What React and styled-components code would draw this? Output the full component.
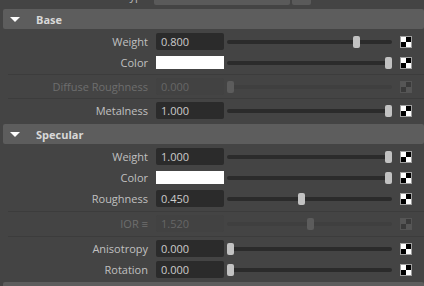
import React from "react";
import styled, { createGlobalStyle } from "styled-components";

const Global = createGlobalStyle`
  html, body {
    margin: 0;
    padding: 0;
    background: #444444;
    overflow: hidden;
  }
  body {
    font-family: "Open Sans", "Liberation Sans", sans-serif;
    font-size: 11px;
  }
`;

const Editor = styled.div`
  width: 424px;
  height: 286px;
  overflow: hidden;
  background: #444444;
  display: flex;
  flex-direction: column;
`;

// partially scrolled-off row at the top
const TypeRow = styled.div`
  display: flex;
  align-items: center;
  flex: none;
  height: 20px;
  margin-top: -15px;
`;

const TypeLabel = styled.span`
  width: 148px;
  text-align: right;
  color: #bdbdbd;
`;

const Dropdown = styled.div`
  width: 136px;
  height: 20px;
  margin-left: 6px;
  background: #5a5a5a;
  border-radius: 2px;
  color: #d0d0d0;
  line-height: 20px;
  padding-left: 6px;
  box-sizing: border-box;
`;

const DropButton = styled.div`
  width: 19px;
  height: 20px;
  margin-left: 2px;
  background: #5a5a5a;
  border-radius: 2px;
`;

const Frame = styled.section`
  display: flex;
  flex-direction: column;
  flex: none;
  margin-top: ${(p) => p.$gap}px;
`;

const FrameHeader = styled.div`
  height: 20px;
  margin-left: 3px;
  background: #5d5d5d;
  border-radius: 2px;
  display: flex;
  align-items: center;
`;

const Arrow = styled.span`
  width: 0;
  height: 0;
  border-left: 5px solid transparent;
  border-right: 5px solid transparent;
  border-top: 5px solid #ffffff;
  margin-left: 7px;
  margin-right: 16px;
`;

const FrameTitle = styled.span`
  font-weight: 700;
  color: #d8d8d8;
`;

const FrameBody = styled.div`
  margin-left: 8px;
  padding-top: 2px;
  display: flex;
  flex-direction: column;
`;

const Row = styled.div`
  display: flex;
  align-items: center;
  height: 21px;
`;

const Label = styled.span`
  width: 140px;
  margin-right: 8px;
  text-align: right;
  white-space: nowrap;
  color: ${(p) => (p.$disabled ? "#6e6e6e" : "#c0c0c0")};
`;

const Field = styled.div`
  width: 68px;
  height: 17px;
  box-sizing: border-box;
  padding-left: 5px;
  line-height: 17px;
  border-radius: 2px;
  background: ${(p) => (p.$disabled ? "#424242" : "#2b2b2b")};
  color: ${(p) => (p.$disabled ? "#666666" : "#cccccc")};
`;

const Swatch = styled.div`
  width: 68px;
  height: 13px;
  background: #ffffff;
`;

const Slider = styled.div`
  position: relative;
  width: 165px;
  height: 12px;
  margin-left: 3px;

  &::before {
    content: "";
    position: absolute;
    left: 0;
    right: 0;
    top: 4px;
    height: 4px;
    border-radius: 2px;
    background: ${(p) => (p.$disabled ? "#3f3f3f" : "#2b2b2b")};
  }
`;

const Thumb = styled.div`
  position: absolute;
  top: 0;
  width: 7px;
  height: 12px;
  border-radius: 2px;
  background: ${(p) => (p.$disabled ? "#5c5c5c" : "#c2c2c2")};
`;

const Checker = styled.div`
  width: 10px;
  height: 10px;
  margin-left: 8px;
  border: 1px solid ${(p) => (p.$disabled ? "#555555" : "#a0a0a0")};
  display: grid;
  grid-template-columns: 5px 5px;
  grid-template-rows: 5px 5px;
`;

const Cell = styled.span`
  background: ${(p) =>
    p.$light
      ? p.$disabled
        ? "#565656"
        : "#ffffff"
      : p.$disabled
      ? "#3a3a3a"
      : "#000000"};
`;

const Separator = styled.div`
  height: 1px;
  margin: ${(p) => (p.$wide ? "2px 0 1px" : "1px 0")};
  background: #3c3c3c;
`;

const MapButton = ({ disabled }) => (
  <Checker $disabled={disabled}>
    <Cell $light $disabled={disabled} />
    <Cell $disabled={disabled} />
    <Cell $disabled={disabled} />
    <Cell $light $disabled={disabled} />
  </Checker>
);

const Attr = ({ label, value, frac, color, disabled }) => (
  <Row>
    <Label $disabled={disabled}>{label}</Label>
    {color ? <Swatch /> : <Field $disabled={disabled}>{value}</Field>}
    <Slider $disabled={disabled}>
      <Thumb $disabled={disabled} style={{ left: Math.round(frac * 158) }} />
    </Slider>
    <MapButton disabled={disabled} />
  </Row>
);

const base = [
  { label: "Weight", value: "0.800", frac: 0.8 },
  { label: "Color", frac: 1, color: true },
  { sep: true },
  { label: "Diffuse Roughness", value: "0.000", frac: 0, disabled: true },
  { sep: true },
  { label: "Metalness", value: "1.000", frac: 1 },
];

const specular = [
  { label: "Weight", value: "1.000", frac: 1 },
  { label: "Color", frac: 1, color: true },
  { label: "Roughness", value: "0.450", frac: 0.45 },
  { sep: true, wide: true },
  { label: "IOR ≡", value: "1.520", frac: 1.52 / 3, disabled: true },
  { sep: true, wide: true },
  { label: "Anisotropy", value: "0.000", frac: 0 },
  { label: "Rotation", value: "0.000", frac: 0 },
];

const Section = ({ title, attrs, gap }) => (
  <Frame $gap={gap}>
    <FrameHeader>
      <Arrow />
      <FrameTitle>{title}</FrameTitle>
    </FrameHeader>
    {attrs && (
      <FrameBody>
        {attrs.map((a, i) =>
          a.sep ? <Separator key={i} $wide={a.wide} /> : <Attr key={i} {...a} />
        )}
      </FrameBody>
    )}
  </Frame>
);

export default function App() {
  return (
    <Editor>
      <Global />
      <TypeRow>
        <TypeLabel>Type</TypeLabel>
        <Dropdown>Ai Standard Surface</Dropdown>
        <DropButton />
      </TypeRow>
      <Section title="Base" attrs={base} gap={4} />
      <Section title="Specular" attrs={specular} gap={3} />
      <Section gap={2} />
    </Editor>
  );
}
